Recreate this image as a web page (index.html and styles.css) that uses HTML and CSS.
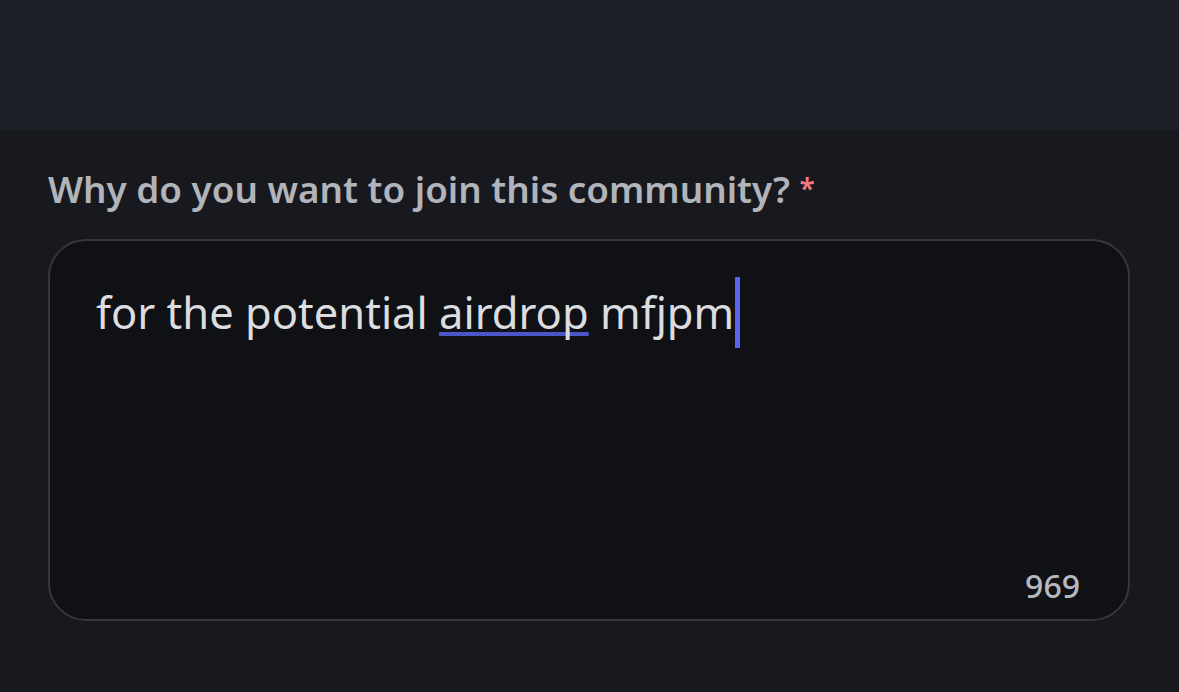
FILE: index.html
```html
<!DOCTYPE html>
<html>
<head>
<meta charset="utf-8">
<link rel="stylesheet" href="styles.css">
</head>
<body>
<div class="topbar"></div>
<main class="form">
  <label class="label">Why do you want to join this community? <span class="req">*</span></label>
  <div class="field">
    <div class="value">for the potential <span class="spell">airdrop</span> mfjpm<span class="caret"></span></div>
    <div class="counter">969</div>
  </div>
</main>
</body>
</html>
```
FILE: styles.css
```css
html, body {
  margin: 0;
  padding: 0;
  background: #17191e;
  width: 1179px;
  height: 692px;
  overflow: hidden;
  font-family: "Noto Sans", "Open Sans", sans-serif;
  font-variant-ligatures: none;
}
.topbar {
  height: 130px;
  background: #1d1f26;
}
.form {
  padding: 36px 49px 0 48px;
  display: flex;
  flex-direction: column;
}
.label {
  font-size: 36.8px;
  font-weight: 600;
  color: #b1b4ba;
  line-height: 44px;
  height: 44px;
}
.req {
  color: #f27b7e;
  font-size: 28px;
  vertical-align: 4px;
}
.field {
  margin-top: 29px;
  border: 2px solid #35373d;
  border-radius: 38px;
  background: #0f1115;
  display: flex;
  flex-direction: column;
  justify-content: space-between;
  padding: 35px 48px 12px 46px;
  box-sizing: content-box;
  height: 331px;
}
.value {
  font-size: 43.5px;
  color: #dcdde0;
  line-height: 72px;
  display: flex;
  align-items: center;
  white-space: pre;
}
.spell {
  text-decoration: underline;
  text-decoration-color: #4b56c9;
  text-decoration-thickness: 4px;
  text-underline-offset: 3px;
  text-decoration-skip-ink: none;
}
.caret {
  display: inline-block;
  width: 5px;
  height: 71px;
  background: #5865f2;
  margin-left: 1px;
}
.counter {
  align-self: flex-end;
  font-size: 32px;
  color: #b5b8bf;
  font-weight: 500;
}
```
